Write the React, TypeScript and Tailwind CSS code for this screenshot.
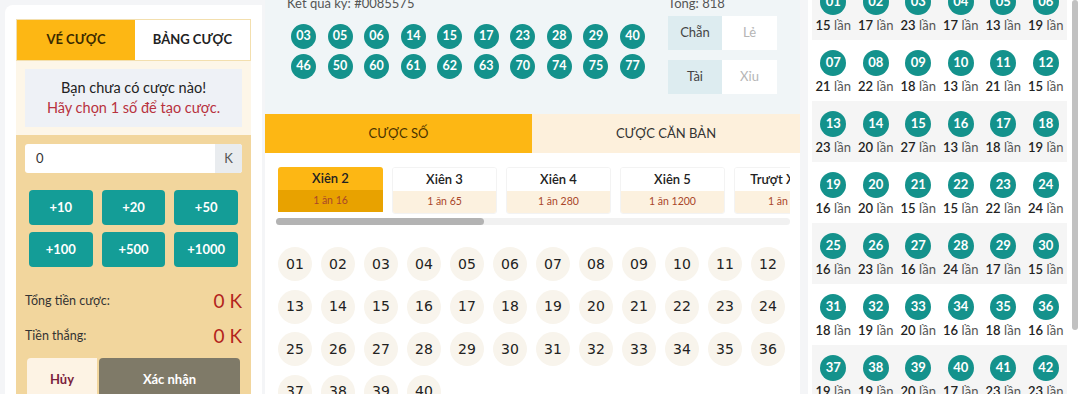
import React from "react"

const font = { fontFamily: "Lato, 'Noto Sans', sans-serif" }

const results = ["03", "05", "06", "14", "15", "17", "23", "28", "29", "40", "46", "50", "60", "61", "62", "63", "70", "74", "75", "77"]

const betTypes = [
  { name: "Xiên 2", rate: "1 ăn 16", active: true },
  { name: "Xiên 3", rate: "1 ăn 65" },
  { name: "Xiên 4", rate: "1 ăn 280" },
  { name: "Xiên 5", rate: "1 ăn 1200" },
  { name: "Trượt Xiên 4", rate: "1 ăn 3.5" },
]

const counts = [
  15, 17, 23, 17, 13, 19,
  21, 22, 18, 13, 21, 15,
  23, 20, 27, 13, 18, 19,
  16, 20, 15, 15, 22, 24,
  16, 23, 16, 24, 17, 15,
  18, 19, 20, 16, 18, 16,
  19, 19, 20, 17, 23, 23,
]

const pad = (n: number) => String(n).padStart(2, "0")

function BetSlip() {
  return (
    <div className="w-[257px] ml-[5px] mt-[5px] h-[400px] bg-white rounded-tl-lg px-[11px] pt-[14px] shrink-0">
      <div className="flex h-[42px] border border-[#f3dfae]">
        <div className="w-[118px] bg-[#fdb714] flex items-center justify-center text-[13px] font-bold text-[#3b2a00]">VÉ CƯỢC</div>
        <div className="flex-1 bg-white flex items-center justify-center text-[13px] font-bold text-[#222]">BẢNG CƯỢC</div>
      </div>
      <div className="bg-[#fdf6e8] px-[9px] py-[8px]">
        <div className="h-[58px] bg-[#eef1f6] flex flex-col items-center justify-center text-[14.5px] leading-[20px]">
          <div className="text-[#222]">Bạn chưa có cược nào!</div>
          <div className="text-[#b8323e]">Hãy chọn 1 số để tạo cược.</div>
        </div>
      </div>
      <div className="bg-[#f2d69d] px-[9px] pt-[9px] h-[260px]">
        <div className="flex h-[29px] bg-white rounded-[3px] overflow-hidden">
          <div className="flex-1 flex items-center pl-[11px] text-[13px] text-[#333]">0</div>
          <div className="w-[27px] bg-[#e9ecef] flex items-center justify-center text-[13px] text-[#555]">K</div>
        </div>
        <div className="grid grid-cols-3 gap-x-[9px] gap-y-[7px] px-[4px] mt-[17px]">
          {["+10", "+20", "+50", "+100", "+500", "+1000"].map((v) => (
            <div key={v} className="h-[35px] bg-[#149d97] rounded-[4px] flex items-center justify-center text-white text-[13px] font-bold">{v}</div>
          ))}
        </div>
        <div className="flex items-center justify-between h-[35px] mt-[17px]">
          <span className="text-[12.5px] text-[#333]">Tổng tiền cược:</span>
          <span className="text-[19px] text-[#b3241c]">0 K</span>
        </div>
        <div className="flex items-center justify-between h-[35px]">
          <span className="text-[12.5px] text-[#333]">Tiền thắng:</span>
          <span className="text-[19px] text-[#b3241c]">0 K</span>
        </div>
        <div className="flex mt-[4px] px-[2px]">
          <div className="w-[70px] h-[44px] bg-[#fdf3e4] rounded-tl-[4px] flex items-center justify-center text-[13px] font-bold text-[#7a1f3d]">Hủy</div>
          <div className="flex-1 ml-[2px] h-[44px] bg-[#7f7a68] rounded-t-[4px] flex items-center justify-center text-[13px] font-bold text-white">Xác nhận</div>
        </div>
      </div>
    </div>
  )
}

function Results() {
  return (
    <div className="flex h-[114px] bg-[#f0f5f7] pl-[26px]">
      <div className="w-[377px]">
        <div className="text-[13px] text-[#555] leading-[16px] -mt-[5px] -ml-[4px]">Kết quả kỳ: #0085575</div>
        <div className="grid grid-cols-10 w-[354px] gap-x-[11.5px] gap-y-[5px] mt-[13px]">
          {results.map((r) => (
            <div key={r} className="w-[25px] h-[25px] rounded-full bg-[#14928c] flex items-center justify-center text-white text-[12.5px] font-bold">{r}</div>
          ))}
        </div>
      </div>
      <div>
        <div className="text-[13px] text-[#555] leading-[16px] -mt-[5px]">Tổng: 818</div>
        <div className="flex mt-[5px] h-[34px] w-[109px]">
          <div className="w-[54px] bg-[#ddecf0] flex items-center justify-center text-[13px] text-[#444]">Chẵn</div>
          <div className="flex-1 bg-white flex items-center justify-center text-[13px] text-[#b5b5b5]">Lẻ</div>
        </div>
        <div className="flex mt-[10px] h-[34px] w-[109px]">
          <div className="w-[54px] bg-[#ddecf0] flex items-center justify-center text-[13px] text-[#444]">Tài</div>
          <div className="flex-1 bg-white flex items-center justify-center text-[13px] text-[#b5b5b5]">Xỉu</div>
        </div>
      </div>
    </div>
  )
}

function BetBoard() {
  return (
    <div className="bg-white h-[280px] overflow-hidden">
      <div className="flex h-[39px]">
        <div className="w-[267px] bg-[#fdb714] flex items-center justify-center text-[13px] text-[#4a3300]">CƯỢC SỐ</div>
        <div className="flex-1 bg-[#fdf0dc] flex items-center justify-center text-[13px] text-[#333]">CƯỢC CĂN BẢN</div>
      </div>
      <div className="pl-[11px] pr-[10px] pt-[14px]">
        <div className="overflow-hidden w-[514px]">
          <div className="flex gap-[9px] pl-[2px]">
            {betTypes.map((b) => (
              <div key={b.name} className={`w-[105px] shrink-0 rounded-[3px] overflow-hidden ${b.active ? "" : "border border-[#f3f3f3]"}`}>
                <div className={`h-[23px] flex items-center justify-center whitespace-nowrap text-[13px] font-semibold text-[#222] ${b.active ? "bg-[#fdb714]" : "bg-white"}`}>{b.name}</div>
                <div className={`h-[22px] flex items-center justify-center text-[10.5px] text-[#a9462a] ${b.active ? "bg-[#e8a200]" : "bg-[#fcf1df]"}`}>{b.rate}</div>
              </div>
            ))}
          </div>
        </div>
        <div className="h-[7px] mt-[4px] w-[514px] bg-[#f1f1f1] rounded-full">
          <div className="h-[7px] w-[208px] bg-[#b3b3b3] rounded-full"></div>
        </div>
        <div className="grid grid-cols-[repeat(12,34px)] gap-x-[9px] gap-y-[8.5px] mt-[22px] pl-[2px]" style={{ fontFamily: "'DejaVu Sans', Verdana, sans-serif" }}>
          {Array.from({ length: 40 }, (_, i) => (
            <div key={i} className="w-[34px] h-[34px] rounded-full bg-[#f8f4ec] flex items-center justify-center text-[14px] text-[#222]">{pad(i + 1)}</div>
          ))}
        </div>
      </div>
    </div>
  )
}

function Stats() {
  const rows = Array.from({ length: 7 }, (_, r) => counts.slice(r * 6, r * 6 + 6))
  return (
    <div className="relative w-[272px] ml-[8px] h-[394px] bg-white overflow-hidden shrink-0">
      <div className="pl-[4px] w-[259px] -mt-[21px]">
        {rows.map((row, r) => (
          <div key={r} className={`grid grid-cols-6 h-[61px] pt-[10px] ${r % 2 === 0 ? "bg-[#f5f5f5]" : "bg-white"}`}>
            {row.map((c, i) => (
              <div key={i} className="flex flex-col items-center">
                <div className="w-[26px] h-[26px] rounded-full bg-[#14928c] flex items-center justify-center text-white text-[13px] font-bold">{pad(r * 6 + i + 1)}</div>
                <div className="text-[13px] leading-[18px] mt-[1px]">
                  <span className="font-semibold text-[#222]">{c}</span> <span className="text-[#555]">lần</span>
                </div>
              </div>
            ))}
          </div>
        ))}
      </div>
      <div className="absolute right-[2px] top-0 w-[6px] h-[330px] rounded-full bg-[#c1c1c1]"></div>
    </div>
  )
}

export default function App() {
  return (
    <div className="w-[1080px] h-[394px] overflow-hidden bg-[#f4f5f7] flex" style={font}>
      <BetSlip />
      <div className="w-[535px] ml-[3px] shrink-0">
        <Results />
        <BetBoard />
      </div>
      <Stats />
    </div>
  )
}
